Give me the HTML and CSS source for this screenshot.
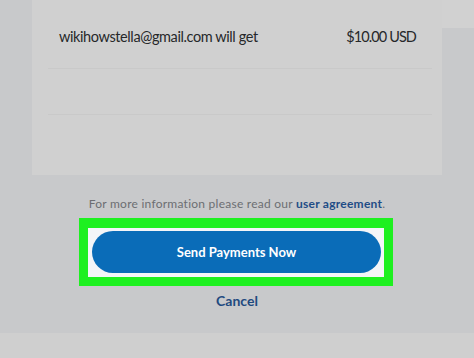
FILE: index.html
```html
<!DOCTYPE html>
<html>
<head>
<meta charset="utf-8">
<link rel="stylesheet" href="styles.css">
</head>
<body>
<div class="top">
  <div class="gutter"></div>
  <div class="card">
    <div class="lines">
      <div class="row">
        <span class="who">wikihowstella@gmail.com will get</span>
        <span class="amt">$10.00 USD</span>
      </div>
      <div class="row empty"></div>
      <div class="row last"></div>
    </div>
  </div>
  <div class="side"><div class="side-top"></div></div>
</div>
<div class="actions">
  <p class="info">For more information please read our <a class="link">user agreement</a>.</p>
  <div class="highlight">
    <div class="inner">
      <button class="btn">Send Payments Now</button>
    </div>
  </div>
  <a class="cancel">Cancel</a>
</div>
<div class="footer"></div>
</body>
</html>
```

FILE: styles.css
```css
* { box-sizing: border-box; }
html, body { margin: 0; padding: 0; }
body {
  width: 474px;
  height: 358px;
  overflow: hidden;
  background: #c8c9cb;
  font-family: Lato, "Open Sans", sans-serif;
}
.top {
  display: flex;
  height: 175px;
}
.gutter { width: 32px; flex: none; }
.card {
  width: 410px;
  flex: none;
  background: #d0d0d0;
}
.lines {
  display: flex;
  flex-direction: column;
  padding: 0 10px 0 16px;
}
.row {
  height: 69px;
  border-bottom: 1px solid #c9c9c9;
  display: flex;
  justify-content: space-between;
  align-items: flex-end;
  padding: 0 16px 23px 11px;
  color: #26282a;
  font-size: 14.5px;
  letter-spacing: -0.4px;
}
.amt { letter-spacing: -0.9px; }
.row.empty { height: 46px; }
.row.last { border-bottom: none; height: 60px; }
.side { flex: 1; }
.side-top { height: 28px; background: #d1d1d1; }
.actions {
  height: 158px;
  display: flex;
  flex-direction: column;
  align-items: center;
  padding-top: 20px;
}
.info {
  margin: 0;
  font-size: 12px;
  letter-spacing: 0.25px;
  color: #6c6e72;
  line-height: 18px;
}
.link {
  color: #1f4c86;
  font-weight: bold;
}
.highlight {
  margin-top: 5px;
  width: 314px;
  height: 68px;
  background: #1ef020;
  padding: 10px 9px 9px 9px;
  margin-left: -2px;
}
.inner {
  height: 49px;
  background: #f4f5f8;
  padding: 3px 3px 0 4px;
}
.btn {
  display: block;
  width: 289px;
  height: 42px;
  border: none;
  border-radius: 21px;
  background: #0a6cb8;
  color: #ffffff;
  font-family: Lato, "Open Sans", sans-serif;
  font-weight: bold;
  font-size: 13px;
  letter-spacing: 0;
}
.cancel {
  margin-top: 6px;
  color: #1f4a80;
  font-weight: bold;
  font-size: 14px;
}
.footer {
  height: 25px;
  background: #cfcfcf;
}
```
